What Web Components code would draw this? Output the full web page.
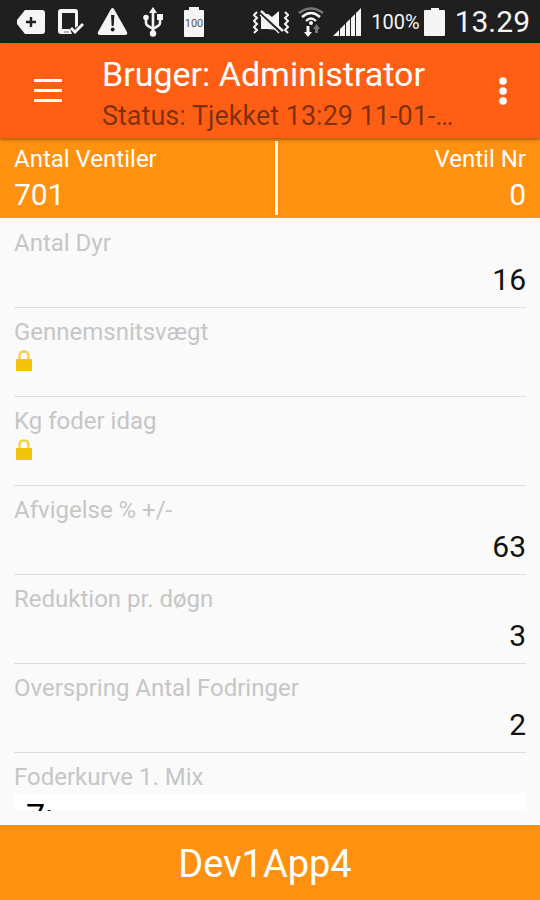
<!DOCTYPE html>
<html lang="da">
<head>
<meta charset="utf-8">
<meta name="viewport" content="width=device-width, initial-scale=1">
<title>Bruger: Administrator</title>
<style>
  html, body { margin: 0; height: 100%; }
  body {
    --primary: #ff5f15;
    --accent: #ff9110;
    --surface: #fafafa;
    background: var(--surface);
    font-family: Roboto, "Noto Sans", sans-serif;
  }
</style>
</head>
<body>

<app-shell>
  <status-bar slot="top" battery="100%" clock="13.29"></status-bar>
  <app-bar slot="top">
    Bruger: Administrator
    <span slot="subtitle">Status: Tjekket 13:29 11-01-…</span>
  </app-bar>
  <summary-bar slot="top">
    <summary-cell label="Antal Ventiler">701</summary-cell>
    <summary-cell label="Ventil Nr" align="end">0</summary-cell>
  </summary-bar>

  <data-row label="Antal Dyr">16</data-row>
  <data-row label="Gennemsnitsvægt" locked></data-row>
  <data-row label="Kg foder idag" locked></data-row>
  <data-row label="Afvigelse % +/-">63</data-row>
  <data-row label="Reduktion pr. døgn">3</data-row>
  <data-row label="Overspring Antal Fodringer">2</data-row>
  <select-row label="Foderkurve 1. Mix" options="7:"></select-row>

  <device-button slot="bottom">Dev1App4</device-button>
</app-shell>

<script>
(function () {
  // attaches an open shadow root with the element's own styles and markup
  function render(el, css, html) {
    const root = el.attachShadow({ mode: 'open' });
    root.innerHTML = '<style>' + css + '</style>' + html;
    return root;
  }

  class AppShell extends HTMLElement {
    connectedCallback() {
      render(this, `
        :host { display: flex; flex-direction: column; height: 100vh; background: var(--surface); }
        main { flex: 1; min-height: 0; margin-bottom: 14px; padding-top: 1px; overflow-y: auto; scrollbar-width: none; }
      `, `
        <slot name="top"></slot>
        <main><slot></slot></main>
        <slot name="bottom"></slot>
      `);
    }
  }

  class StatusBar extends HTMLElement {
    connectedCallback() {
      const battery = this.getAttribute('battery') || '';
      const clock = this.getAttribute('clock') || '';
      render(this, `
        :host { display: flex; justify-content: space-between; align-items: center; height: 43px; padding: 0 10px 0 16px; background: #1f1f1f; color: #f5f5f5; }
        div { display: flex; align-items: center; }
        .left { gap: 13px; }
        .right { gap: 9px; }
        .charge { display: flex; align-items: center; gap: 4px; }
        svg { display: block; fill: #f5f5f5; }
        .level { font-size: 20px; line-height: 24px; }
        .clock { font-size: 30px; line-height: 40px; }
      `, `
        <div class="left">
          <svg width="29" height="30" viewBox="0 0 29 30"><path d="M9 3H26Q29 3 29 6V24Q29 27 26 27H9L1 17V13Z"/><path d="M15 10V20M10 15H20" stroke="#1f1f1f" stroke-width="2.4"/></svg>
          <svg width="26" height="30" viewBox="0 0 26 30"><path fill-rule="evenodd" d="M3 2H17Q20 2 20 5V19L17 21V6H4V22H12L14 27H3Q0 27 0 24V5Q0 2 3 2Z"/><path d="M6 25H11" stroke="#777"/><path d="M13 21L17 25L25 17" fill="none" stroke="#f5f5f5" stroke-width="3"/></svg>
          <svg width="31" height="30" viewBox="0 0 31 30"><path d="M14 2Q15.5 0 17 2L30 25Q31 28 28 28H3Q0 28 1 25Z"/><path d="M14 8H17.400L16.700 19H14.700Z" fill="#1f1f1f"/><circle cx="15.700" cy="22.500" r="1.900" fill="#1f1f1f"/></svg>
          <svg width="24" height="30" viewBox="-2 0 24 30"><path d="M10 3V27M3 11V16Q3 18 5 19L10 22L15 19Q17 18 17 16V10" fill="none" stroke="#f5f5f5" stroke-width="2.600"/><path d="M10 0L14 6H6Z"/><circle cx="3" cy="10.500" r="2.800"/><path d="M14 7H20V13H14Z"/><circle cx="10" cy="26.500" r="3.200"/></svg>
          <svg width="32" height="30" viewBox="-6 0 32 30"><path d="M5 0H15V3H19Q20 3 20 4V29Q20 30 19 30H1Q0 30 0 29V4Q0 3 1 3H5Z"/><text x="10" y="20" font-size="11" text-anchor="middle" fill="#555">100</text></svg>
        </div>
        <div class="right">
          <svg width="36" height="24" viewBox="0 0 36 24"><path d="M8 4H15L19 7L26 1V20L14 19H8Z"/><path d="M6 1L29 23" stroke="#1f1f1f" stroke-width="5"/><path d="M8 1L30 21" stroke="#f5f5f5" stroke-width="2.400"/><path d="M4 2L1 5L4 8L1 11L4 14L1 17L4 20L1 23M32 2L35 5L32 8L35 11L32 14L35 17L32 20L35 23" fill="none" stroke="#f5f5f5" stroke-width="2"/><path d="M7 5L26 23" stroke="#f5f5f5" stroke-width="1.400"/></svg>
          <svg width="26" height="30" viewBox="0 0 26 30"><g fill="none" stroke-width="2.400"><path d="M1 6Q13 -3 25 6" stroke="#777"/><path d="M4 10Q13 2 22 10M8 14Q13 9 18 14" stroke="#f5f5f5"/></g><circle cx="13" cy="16" r="2"/><path d="M8.500 19H11.500V25H14L10 30L6 25H8.500Z"/><path d="M17 26H20V22H22L18.500 17L15 22H17Z" fill="#777"/></svg>
          <svg width="29" height="28" viewBox="0 0 29 28"><path d="M0 28L6 22V28ZM7 21L12 16V28H7ZM13 15L17 11V28H13ZM18 10L22 6V28H18ZM23 5L28 0V28H23Z"/></svg>
          <div class="charge">
            <span class="level"></span>
            <svg width="22" height="28" viewBox="0 0 22 28"><path d="M7 0H15V2H20Q21 2 21 3V27Q21 28 20 28H1Q0 28 0 27V3Q0 2 1 2H7Z"/></svg>
          </div>
          <span class="clock"></span>
        </div>
      `);
      this.shadowRoot.querySelector('.level').textContent = battery;
      this.shadowRoot.querySelector('.clock').textContent = clock;
    }
  }

  class AppBar extends HTMLElement {
    connectedCallback() {
      render(this, `
        :host { display: flex; height: 95px; background: var(--primary); color: #fff; box-shadow: 0 1px 4px rgba(0, 0, 0, .5); z-index: 1; }
        button { display: flex; align-items: center; justify-content: center; border: 0; padding: 0; background: none; }
        .menu { width: 96px; }
        .more { width: 74px; }
        svg { display: block; fill: #fff; }
        .text { flex: 1; min-width: 0; padding: 10px 0 0 6px; white-space: nowrap; }
        h1 { margin: 0; font-size: 34px; line-height: 42px; font-weight: 400; }
        p { margin: 0; font-size: 27px; line-height: 42px; color: rgba(0, 0, 0, .5); }
      `, `
        <button class="menu" aria-label="Menu">
          <svg width="28" height="26" viewBox="0 0 28 26"><path d="M0 1H28V4H0ZM0 11H28V14H0ZM0 21H28V24H0Z"/></svg>
        </button>
        <div class="text">
          <h1><slot></slot></h1>
          <p><slot name="subtitle"></slot></p>
        </div>
        <button class="more" aria-label="Flere valg">
          <svg width="8" height="30" viewBox="0 0 8 30"><circle cx="4" cy="5" r="3.800"/><circle cx="4" cy="15" r="3.800"/><circle cx="4" cy="25" r="3.800"/></svg>
        </button>
      `);
    }
  }

  class SummaryBar extends HTMLElement {
    connectedCallback() {
      render(this, `
        :host { display: grid; grid-template-columns: 1fr 1fr; height: 80px; background: var(--accent); color: #fff; }
        ::slotted(:last-child) { border-left: 3px solid #fff6ea; }
      `, '<slot></slot>');
    }
  }

  class SummaryCell extends HTMLElement {
    connectedCallback() {
      render(this, `
        :host { display: block; box-sizing: border-box; margin: 3px 0; padding: 2px 14px 0; }
        :host([align="end"]) { text-align: right; margin-left: 5px; }
        .label { font-size: 24px; line-height: 32px; }
        .value { font-size: 30px; line-height: 40px; }
      `, '<div class="label"></div><div class="value"><slot></slot></div>');
      this.shadowRoot.querySelector('.label').textContent = this.getAttribute('label');
    }
  }

  const ROW_CSS = `
    :host { display: block; box-sizing: border-box; height: 89px; margin: 0 14px; padding-top: 8px; border-bottom: 1px solid #dedede; }
    .label { display: block; font-size: 24px; line-height: 32px; color: #c6c6c6; }
  `;

  class DataRow extends HTMLElement {
    connectedCallback() {
      render(this, ROW_CSS + `
        .value { padding-top: 2px; font-size: 30px; line-height: 38px; text-align: right; color: #111; }
        svg { display: block; margin: 0 2px; }
      `, '<div class="label"></div><div class="value">' +
        (this.hasAttribute('locked')
          ? '<svg width="16" height="21" viewBox="0 0 16 21" role="img" aria-label="Låst"><path d="M3.500 10V6Q3.500 1.500 8 1.500T12.500 6V10" fill="none" stroke="#f3d34a" stroke-width="2.400"/><rect y="9" width="16" height="12" rx="1" fill="#f3c20a"/></svg>'
          : '<slot></slot>') +
        '</div>');
      this.shadowRoot.querySelector('.label').textContent = this.getAttribute('label');
    }
  }

  class SelectRow extends HTMLElement {
    connectedCallback() {
      const root = render(this, ROW_CSS + `
        select { appearance: none; display: block; width: 100%; height: 46px; border: 0; border-radius: 0; padding: 0 12px; background: #fff; color: #000; font: 34px Roboto, "Noto Sans", sans-serif; }
      `, '<label class="label" for="choice"></label><select id="choice"></select>');
      root.querySelector('label').textContent = this.getAttribute('label');
      (this.getAttribute('options') || '').split('|').forEach(function (text) {
        root.querySelector('select').add(new Option(text));
      });
    }
  }

  class DeviceButton extends HTMLElement {
    connectedCallback() {
      render(this, `
        :host { display: block; }
        button { display: block; width: 100%; height: 75px; border: 0; padding: 2px 10px 0 0; background: var(--accent); color: #fff; font: 38px Roboto, "Noto Sans", sans-serif; }
      `, '<button><slot></slot></button>');
    }
  }

  customElements.define('app-shell', AppShell);
  customElements.define('status-bar', StatusBar);
  customElements.define('app-bar', AppBar);
  customElements.define('summary-bar', SummaryBar);
  customElements.define('summary-cell', SummaryCell);
  customElements.define('data-row', DataRow);
  customElements.define('select-row', SelectRow);
  customElements.define('device-button', DeviceButton);
})();
</script>
</body>
</html>
